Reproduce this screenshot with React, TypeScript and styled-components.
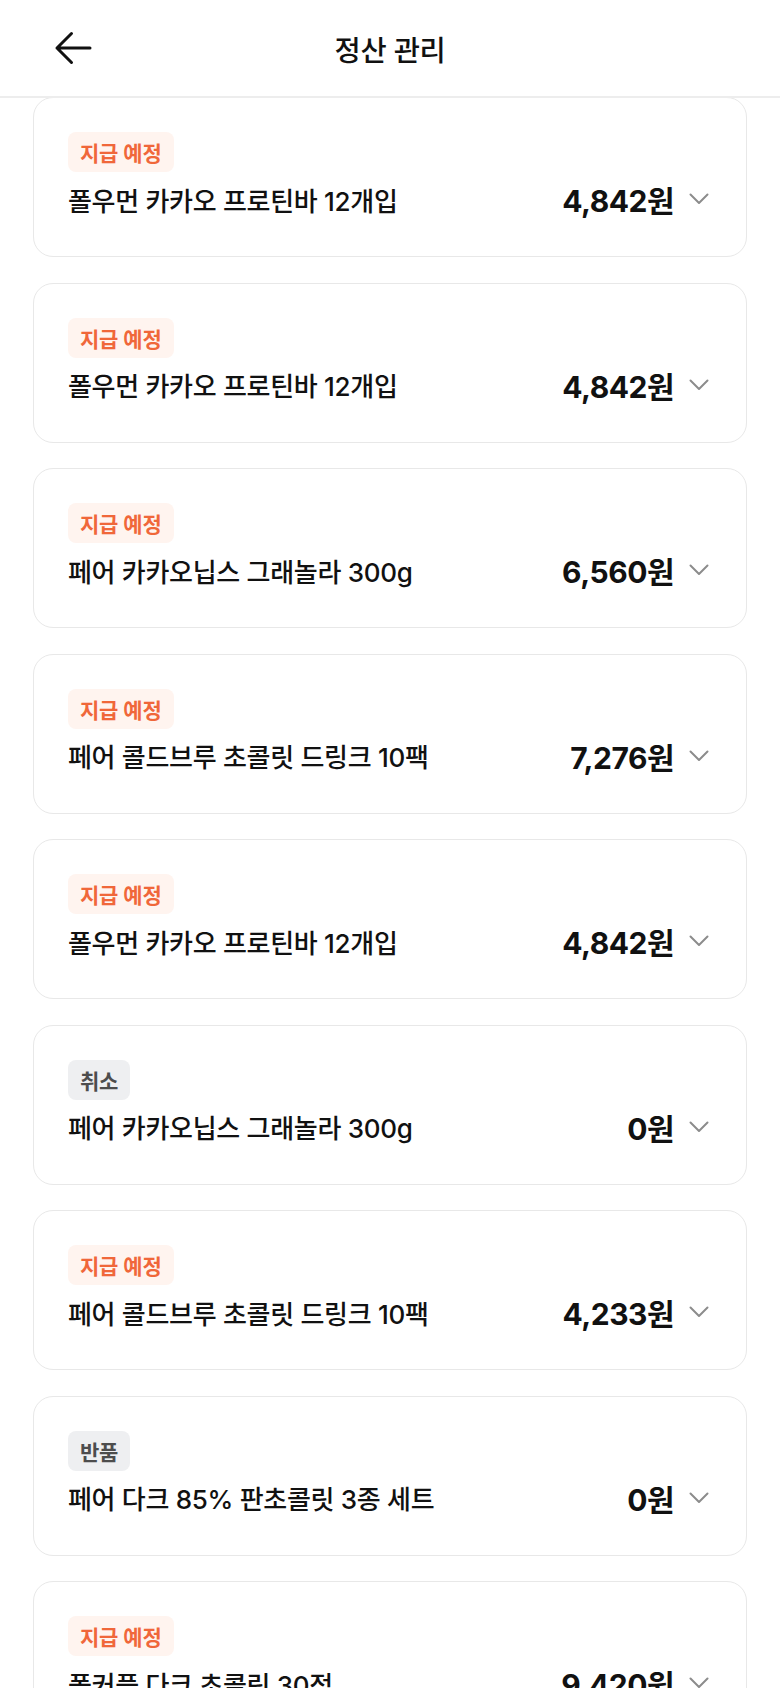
import React from 'react'
import styled, { createGlobalStyle } from 'styled-components'

type Status = 'pending' | 'cancel' | 'return'

interface Settlement {
    status: Status
    name: string
    amount: string
}

const statusLabel: Record<Status, string> = {
    pending: '지급 예정',
    cancel: '취소',
    return: '반품',
}

const items: Settlement[] = [
    { status: 'pending', name: '폴우먼 카카오 프로틴바 12개입', amount: '4,842원' },
    { status: 'pending', name: '폴우먼 카카오 프로틴바 12개입', amount: '4,842원' },
    { status: 'pending', name: '페어 카카오닙스 그래놀라 300g', amount: '6,560원' },
    { status: 'pending', name: '페어 콜드브루 초콜릿 드링크 10팩', amount: '7,276원' },
    { status: 'pending', name: '폴우먼 카카오 프로틴바 12개입', amount: '4,842원' },
    { status: 'cancel', name: '페어 카카오닙스 그래놀라 300g', amount: '0원' },
    { status: 'pending', name: '페어 콜드브루 초콜릿 드링크 10팩', amount: '4,233원' },
    { status: 'return', name: '페어 다크 85% 판초콜릿 3종 세트', amount: '0원' },
    { status: 'pending', name: '폴커플 다크 초콜릿 30정', amount: '9,420원' },
]

const App: React.FC = () => {
    return (
        <>
            <GlobalStyle />
            <Page>
                <Header>
                    <BackButton aria-label="뒤로">
                        <svg width="38" height="34" viewBox="0 0 38 34" fill="none">
                            <path
                                d="M36 17H3M17.5 2.5L3 17l14.5 14.5"
                                stroke="#111"
                                strokeWidth="3"
                                strokeLinecap="round"
                                strokeLinejoin="round"
                            />
                        </svg>
                    </BackButton>
                    <Title>정산 관리</Title>
                </Header>
                <List>
                    {items.map((item, i) => (
                        <Card key={i}>
                            <Badge status={item.status}>{statusLabel[item.status]}</Badge>
                            <Row>
                                <Name>{item.name}</Name>
                                <Right>
                                    <Amount>{item.amount}</Amount>
                                    <svg width="20" height="12" viewBox="0 0 20 12" fill="none">
                                        <path
                                            d="M1.5 1.5L10 10l8.5-8.5"
                                            stroke="#8c8c8c"
                                            strokeWidth="2"
                                            strokeLinecap="round"
                                            strokeLinejoin="round"
                                        />
                                    </svg>
                                </Right>
                            </Row>
                        </Card>
                    ))}
                </List>
            </Page>
        </>
    )
}

const GlobalStyle = createGlobalStyle`
    html, body {
        margin: 0;
        padding: 0;
        background: #ffffff;
    }
    body {
        font-family: Inter, "Noto Sans CJK KR", sans-serif;
        color: #111111;
    }
`

const Page = styled.div`
    width: 780px;
    height: 1688px;
    overflow: hidden;
    background: #ffffff;
`

const Header = styled.header`
    position: relative;
    height: 96px;
    display: flex;
    align-items: center;
    justify-content: center;
    border-bottom: 2px solid #ededed;
    box-sizing: content-box;
`

const BackButton = styled.button`
    position: absolute;
    left: 54px;
    top: 31px;
    padding: 0;
    border: none;
    background: none;
    display: flex;
`

const Title = styled.h1`
    margin: 0;
    font-size: 28.5px;
    font-weight: 500;
    letter-spacing: -0.3px;
    color: #111111;
`

const List = styled.div`
    display: flex;
    flex-direction: column;
    gap: 25.5px;
    padding: 0 33px;
    margin-top: -1px;
`

const Card = styled.div`
    display: flex;
    flex-direction: column;
    align-items: flex-start;
    gap: 10px;
    padding: 34px 37px 40px 34px;
    border: 1.5px solid #e8e8e8;
    border-radius: 20px;
    background: #ffffff;
`

const Badge = styled.span<{ status: Status }>`
    display: inline-flex;
    align-items: center;
    height: 40px;
    padding: 0 12px;
    border-radius: 8px;
    font-size: 21px;
    font-weight: 600;
    letter-spacing: -0.2px;
    color: ${(p) => (p.status === 'pending' ? '#f0673a' : '#4d4d4d')};
    background: ${(p) => (p.status === 'pending' ? '#fff4ef' : '#eeeff1')};
`

const Row = styled.div`
    width: 100%;
    height: 34px;
    display: flex;
    align-items: center;
    justify-content: space-between;
`

const Name = styled.span`
    font-size: 26px;
    font-weight: 500;
    letter-spacing: -0.3px;
    color: #111111;
`

const Right = styled.div`
    display: flex;
    align-items: center;
    gap: 15px;
`

const Amount = styled.span`
    font-size: 30px;
    font-weight: 700;
    letter-spacing: -0.5px;
    color: #111111;
`

export default App
